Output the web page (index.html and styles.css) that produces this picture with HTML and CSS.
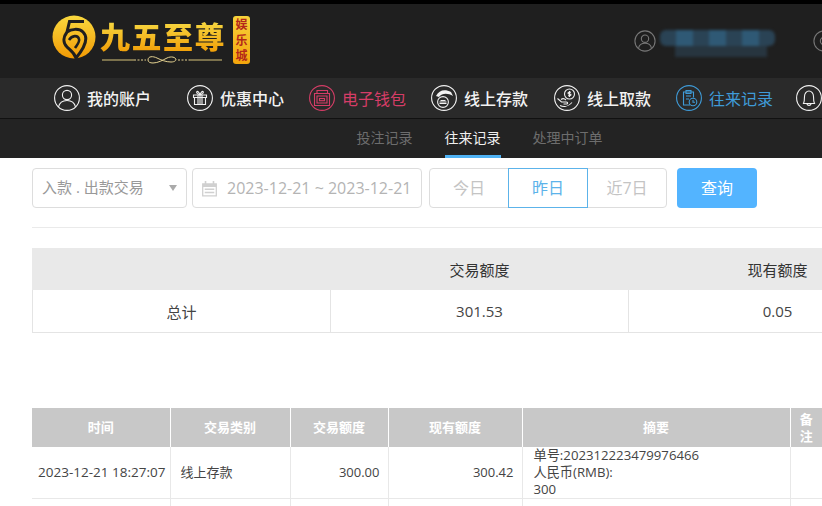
FILE: index.html
```html
<!DOCTYPE html>
<html>
<head>
  <meta charset="utf-8">
  <title>往来记录</title>
  <link rel="stylesheet" href="styles.css">
</head>
<body>

<header class="top">
  <div class="logo">
    <svg class="logo-mark" viewBox="0 0 44 44" width="44" height="44">
      <defs>
        <linearGradient id="gold" x1="0" y1="0" x2="0" y2="1">
          <stop offset="0" stop-color="#f9d93f"/>
          <stop offset="1" stop-color="#f29a04"/>
        </linearGradient>
      </defs>
      <circle cx="22" cy="22" r="21.5" fill="url(#gold)"/>
      <path d="M32 6.5 H17.5 L15 17 C19 14 27 13 31 17 C36 22 34 31 24 43 C22 37 18 35 15 32 C10 27 12 21 15 17" fill="none" stroke="#1f1f1f" stroke-width="3"/>
      <path d="M17 25 C20 20 26 20 27 24 C28 27 25 30 23 33" fill="none" stroke="#1f1f1f" stroke-width="2.6"/>
    </svg>
    <div class="logo-text">
      <div class="logo-name">九五至尊</div>
      <svg class="logo-rule" viewBox="0 0 124 8" width="124" height="8">
        <path d="M2 4 H34 M90 4 H122" stroke="#d8c47a" stroke-width="1"/>
        <path d="M34 4 H46 M78 4 H90" stroke="#e5d290" stroke-width="1" stroke-dasharray="2 1.5"/>
        <path d="M48 4 C48 0 53 0 57 2 C61 4 66 6 71 6 C75 6 76 4 76 4 C76 1 71 0 67 2 C63 4 58 7 53 7 C50 7 48 6 48 4 Z" fill="none" stroke="#e5d290" stroke-width="1"/>
      </svg>
    </div>
    <div class="logo-tag">娱<br>乐<br>城</div>
  </div>
  <div class="account">
    <svg class="account-icon" viewBox="0 0 24 24" width="22" height="22">
      <circle cx="12" cy="12" r="11" fill="none" stroke="#777" stroke-width="1.2"/>
      <circle cx="12" cy="9.5" r="4" fill="none" stroke="#777" stroke-width="1.2"/>
      <path d="M5 19.5 C6 15.5 9 14.5 12 14.5 C15 14.5 18 15.5 19 19.5" fill="none" stroke="#777" stroke-width="1.2"/>
    </svg>
    <div class="blur-name">
      <div class="blur-top">
        <span></span><span></span><span></span><span></span><span></span><span></span><span></span>
      </div>
      <div class="blur-bottom"></div>
    </div>
    <svg class="account-icon account-more" viewBox="0 0 24 24" width="22" height="22">
      <circle cx="12" cy="12" r="11" fill="none" stroke="#777" stroke-width="1.2"/>
      <circle cx="12" cy="12" r="4" fill="none" stroke="#777" stroke-width="1.2"/>
    </svg>
  </div>
</header>

<nav class="main-nav">
  <a class="nav-item">
    <svg viewBox="0 0 26 26" width="26" height="26" fill="none" stroke="currentColor" stroke-width="1.1">
      <circle cx="13" cy="13" r="12.4"/>
      <circle cx="13" cy="10" r="4.6"/>
      <path d="M4.5 22 C5.5 17.5 9 15.5 13 15.5 C17 15.5 20.5 17.5 21.5 22"/>
    </svg>
    <span>我的账户</span>
  </a>
  <a class="nav-item">
    <svg viewBox="0 0 26 26" width="26" height="26" fill="none" stroke="currentColor" stroke-width="1.1">
      <circle cx="13" cy="13" r="12.4"/>
      <path d="M6.5 10 H19.5 V12.5 H6.5 Z M7.5 12.5 V19.5 H18.5 V12.5 M11 10 V19.5 M13 10 V19.5 M15 10 V19.5"/>
      <path d="M13 10 C10 9 9 7.5 10 6.5 C11 6 12.5 8 13 10 C13.5 8 15 6 16 6.5 C17 7.5 16 9 13 10"/>
    </svg>
    <span>优惠中心</span>
  </a>
  <a class="nav-item nav-wallet">
    <svg viewBox="0 0 26 26" width="26" height="26" fill="none" stroke="currentColor" stroke-width="1.1">
      <circle cx="13" cy="13" r="12.4"/>
      <path d="M8 8.5 V5.5 H18.5 V8.5 M5.5 8.5 H20.5 V20.5 H5.5 Z M8 11 H18 V18 H8 Z"/>
      <rect x="10.5" y="13.5" width="5" height="2.2"/>
    </svg>
    <span>电子钱包</span>
  </a>
  <a class="nav-item nav-wide">
    <svg viewBox="0 0 26 26" width="26" height="26" fill="none" stroke="currentColor" stroke-width="1.1">
      <circle cx="13" cy="13" r="12.4"/>
      <path d="M5 11 C8 5 14 4 20 7 L22 11 C17 8 11 8 8 12 Z" fill="currentColor" stroke="none"/>
      <circle cx="12" cy="17" r="5.4"/>
      <path d="M8.5 17 H15.5 M8.5 18.5 H15.5 M9.5 15.5 H14.5"/>
    </svg>
    <span>线上存款</span>
  </a>
  <a class="nav-item">
    <svg viewBox="0 0 26 26" width="26" height="26" fill="none" stroke="currentColor" stroke-width="1.1">
      <circle cx="13" cy="13" r="12.4"/>
      <circle cx="15.5" cy="9" r="5"/>
      <path d="M15.5 6 V12 M17 7.3 H14.8 C13.8 7.3 13.8 9 15 9 H16 C17.3 9 17.3 10.7 16 10.7 H14"/>
      <path d="M3.5 13.5 L7.5 17 H12.5 C14 17 14 19 12.5 19 H9.5 M7 14.5 C9 13 11 14 12 15 M6 20.5 C9 22 14 22 18 17.5"/>
    </svg>
    <span>线上取款</span>
  </a>
  <a class="nav-item nav-current">
    <svg viewBox="0 0 26 26" width="26" height="26" fill="none" stroke="currentColor" stroke-width="1.1">
      <circle cx="13" cy="13" r="12.4"/>
      <path d="M14 20 H7.5 V7 H17.5 V12.5 M10 5.5 H15 V8.5 H10 Z M10 11 H15 M10 14 H13"/>
      <circle cx="17" cy="17" r="3.8"/>
      <path d="M17 15 V17.2 H19"/>
    </svg>
    <span>往来记录</span>
  </a>
  <a class="nav-item">
    <svg viewBox="0 0 26 26" width="26" height="26" fill="none" stroke="currentColor" stroke-width="1.1">
      <circle cx="13" cy="13" r="12.4"/>
      <path d="M7.5 18.5 C8.5 16.5 8.5 14 8.5 11.5 C8.5 8.5 10.5 6 13 6 C15.5 6 17.5 8.5 17.5 11.5 C17.5 14 17.5 16.5 18.5 18.5 Z M11 18.5 C11 21 15 21 15 18.5"/>
    </svg>
  </a>
</nav>

<div class="sub-nav">
  <a class="sub-item">投注记录</a>
  <a class="sub-item sub-active">往来记录</a>
  <a class="sub-item">处理中订单</a>
</div>

<main class="content">
  <div class="filters">
    <div class="field field-type">
      <span>入款 . 出款交易</span>
      <i class="arrow"></i>
    </div>
    <div class="field field-date">
      <svg viewBox="0 0 16 16" width="17" height="17" fill="#d0d0d0">
        <path d="M1 3 H3.5 V1 H5 V3 H11 V1 H12.5 V3 H15 V15.5 H1 Z M2.2 6.5 V14.3 H13.8 V6.5 Z"/>
        <path d="M3.5 8 H12.5 V9.5 H3.5 Z M3.5 11 H12.5 V12.5 H3.5 Z"/>
      </svg>
      <span>2023-12-21 ~ 2023-12-21</span>
    </div>
    <div class="quick">
      <a class="quick-btn">今日</a>
      <a class="quick-btn quick-on">昨日</a>
      <a class="quick-btn">近7日</a>
    </div>
    <a class="search-btn">查询</a>
  </div>

  <table class="total-table">
    <thead>
      <tr><th></th><th>交易额度</th><th>现有额度</th></tr>
    </thead>
    <tbody>
      <tr><td>总计</td><td>301.53</td><td>0.05</td></tr>
    </tbody>
  </table>

  <table class="record-table">
    <thead>
      <tr>
        <th class="c-time">时间</th>
        <th class="c-type">交易类别</th>
        <th class="c-amount">交易额度</th>
        <th class="c-balance">现有额度</th>
        <th class="c-summary">摘要</th>
        <th class="c-note">备注</th>
      </tr>
    </thead>
    <tbody>
      <tr>
        <td class="date">2023-12-21 18:27:07</td>
        <td class="left">线上存款</td>
        <td class="right">300.00</td>
        <td class="right">300.42</td>
        <td class="left summary">单号:202312223479976466<br>人民币(RMB):<br>300</td>
        <td></td>
      </tr>
      <tr>
        <td></td><td></td><td></td><td></td><td></td><td></td>
      </tr>
    </tbody>
  </table>
</main>

</body>
</html>
```

FILE: styles.css
```css
html, body {
  height: 506px;
  overflow: hidden;
}

body {
  margin: 0;
  width: 822px;
  font-family: "Open Sans", "Noto Sans CJK SC", sans-serif;
  font-size: 14px;
  color: #444;
  background: #fff;
}

a {
  cursor: pointer;
}

.top {
  height: 74px;
  border-top: 4px solid #000;
  background: #1f1f1f;
  display: flex;
  align-items: flex-start;
  justify-content: space-between;
  overflow: hidden;
}

.logo {
  display: flex;
  align-items: flex-start;
  padding: 11px 0 0 52px;
}

.logo-text {
  margin-left: 4px;
  width: 124px;
}

.logo-name {
  font-family: "Noto Sans CJK SC", sans-serif;
  font-size: 30px;
  font-weight: 900;
  line-height: 36px;
  letter-spacing: 1.5px;
  white-space: nowrap;
  background: linear-gradient(to bottom, #f7e04a, #f19d06);
  -webkit-background-clip: text;
  background-clip: text;
  color: transparent;
  margin-top: 2px;
}

.logo-rule {
  display: block;
  margin-top: 3px;
}

.logo-tag {
  margin: 1px 0 0 9px;
  width: 17px;
  height: 48px;
  border-radius: 3px;
  background: linear-gradient(to bottom, #f7d23a, #f3a50c);
  color: #b3271a;
  font-family: "Noto Sans CJK SC", sans-serif;
  font-size: 12px;
  font-weight: 700;
  line-height: 15.5px;
  text-align: center;
}

.account {
  display: flex;
  align-items: flex-start;
  padding-top: 26px;
  margin-right: -13px;
}

.blur-name {
  width: 115px;
  margin: 0 38px 0 4px;
  filter: blur(1.5px);
}

.blur-top {
  display: flex;
  height: 16px;
  background: #2a4355;
  border-radius: 6px;
}

.blur-top span {
  flex: 1;
}

.blur-top span:nth-child(even) {
  background: #2f5975;
}

.blur-bottom {
  width: 92px;
  height: 11px;
  margin-left: 15px;
  background: #27353f;
}

.main-nav {
  height: 40px;
  background: #2a2a2a;
  border-bottom: 1px solid #111;
  display: flex;
  align-items: center;
  padding-left: 54px;
  gap: 21px;
  white-space: nowrap;
  overflow: hidden;
}

.nav-item {
  display: flex;
  align-items: center;
  gap: 7px;
  width: 101px;
  flex: none;
  color: #f2f2f2;
  font-size: 16px;
  font-weight: 500;
}

.nav-item:first-child {
  width: 112px;
}

.nav-wide {
  width: 102px;
}

.nav-wallet {
  color: #d63d67;
  font-weight: 400;
}

.nav-current {
  color: #3f9bd8;
  font-weight: 400;
  width: 99px;
}

.sub-nav {
  height: 39px;
  background: #232323;
  display: flex;
  justify-content: center;
  gap: 32px;
  padding-left: 137px;
}

.sub-item {
  height: 36px;
  line-height: 38px;
  color: #6d6d6d;
  font-size: 14px;
}

.sub-active {
  color: #f0f0f0;
  border-bottom: 3px solid #4fb2f4;
}

.content {
  padding: 10px 0 0 32px;
}

.filters {
  display: flex;
  align-items: center;
  height: 40px;
  padding-bottom: 19px;
  border-bottom: 1px solid #eaeaea;
  color: #aaa;
}

.field {
  height: 40px;
  box-sizing: border-box;
  border: 1px solid #ddd;
  border-radius: 4px;
  display: flex;
  align-items: center;
}

.field-type {
  width: 155px;
  padding: 0 9px;
  justify-content: space-between;
  font-size: 15px;
  line-height: 20px;
  padding-bottom: 2px;
  color: #999;
  white-space: nowrap;
}

.arrow {
  width: 0;
  height: 0;
  margin-top: 2px;
  border-left: 4px solid transparent;
  border-right: 4px solid transparent;
  border-top: 6px solid #aaa;
}

.field-date {
  width: 230px;
  margin-left: 5px;
  padding-left: 8px;
  gap: 9px;
  font-size: 16px;
  white-space: nowrap;
  color: #b4b4b4;
}

.quick {
  display: flex;
  margin-left: 7px;
}

.quick-btn {
  width: 80px;
  height: 40px;
  box-sizing: border-box;
  border: 1px solid #ddd;
  margin-left: -1px;
  line-height: 38px;
  text-align: center;
  font-size: 16px;
  color: #c4c4c4;
}

.quick-btn:first-child {
  margin-left: 0;
  border-radius: 4px 0 0 4px;
}

.quick-btn:last-child {
  border-radius: 0 4px 4px 0;
}

.quick-on {
  position: relative;
  border-color: #5cb3ea;
  color: #5cb3ea;
}

.search-btn {
  width: 80px;
  height: 40px;
  margin-left: 10px;
  border-radius: 4px;
  background: #53b4ff;
  color: #fff;
  line-height: 40px;
  text-align: center;
  font-size: 16px;
}

table {
  border-collapse: collapse;
  table-layout: fixed;
}

.total-table {
  width: 895px;
  margin-top: 20px;
  font-size: 15px;
}

.total-table th {
  box-sizing: border-box;
  height: 41px;
  background: #e9e9e9;
  border: 1px solid #e9e9e9;
  font-weight: 400;
  color: #333;
  padding: 0;
}

.total-table td {
  box-sizing: border-box;
  height: 43px;
  padding: 0;
  text-align: center;
  border: 1px solid #e4e4e4;
  border-top: none;
}

.record-table {
  width: 790px;
  margin-top: 75px;
  font-size: 13px;
}

.record-table th {
  box-sizing: border-box;
  height: 39px;
  padding: 0;
  background: #c8c8c8;
  color: #fff;
  font-weight: 700;
  font-size: 13px;
  border-left: 1px solid #fff;
  line-height: 17px;
}

.record-table th:first-child {
  border-left: none;
}

.record-table .c-note {
  padding: 0 9px;
  white-space: normal;
}

.record-table td {
  height: 51px;
  padding: 0;
  text-align: center;
  line-height: 17px;
  border: 1px solid #e8e8e8;
  border-top: none;
  white-space: nowrap;
}

.record-table td:first-child {
  border-left: none;
}

.record-table td.date {
  font-size: 13.5px;
  padding-left: 2px;
}

.record-table td.left {
  text-align: left;
  padding-left: 10px;
}

.record-table td.summary {
  font-size: 13.2px;
  padding-left: 11px;
}

.record-table td.right {
  text-align: right;
  padding-right: 8px;
}

.c-time { width: 138px; }
.c-type { width: 120px; }
.c-amount { width: 98px; }
.c-balance { width: 134px; }
.c-summary { width: 268px; }
.c-note { width: 32px; }
```
